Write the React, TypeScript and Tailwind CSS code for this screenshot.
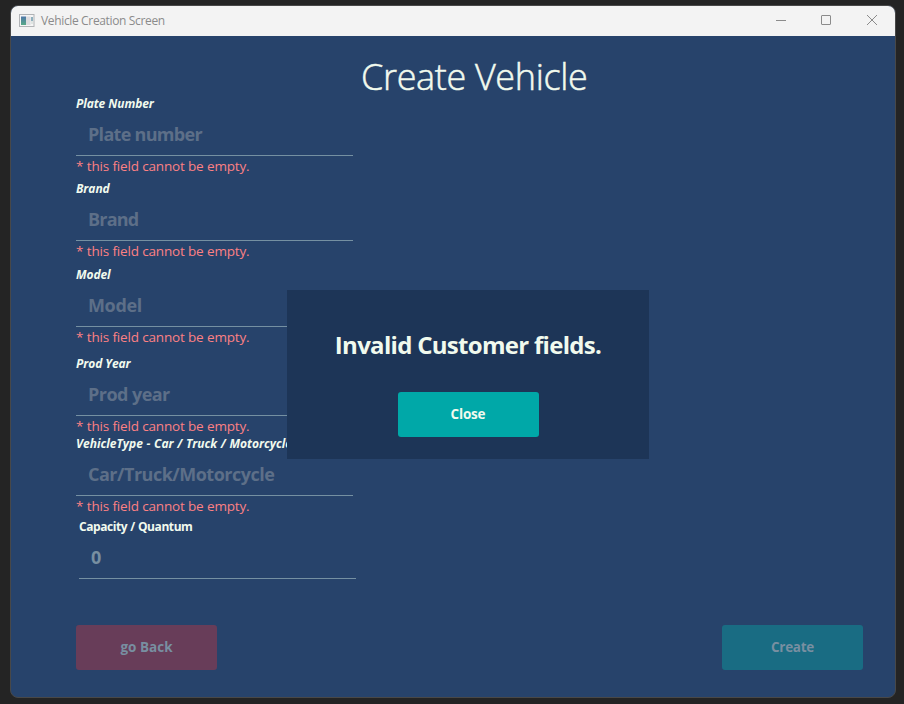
type FieldProps = {
  label: string;
  placeholder: string;
  className?: string;
  labelClass?: string;
  textClass?: string;
  valueClass?: string;
  error?: boolean;
};

function Field({
  label,
  placeholder,
  className = "",
  labelClass = "italic tracking-[-0.08px]",
  textClass = "text-[#5d6f88]",
  valueClass = "tracking-[-0.7px]",
  error = true,
}: FieldProps) {
  return (
    <div className={`h-20 w-[277px] whitespace-nowrap ${className}`}>
      <div className={`h-4 text-[12px] leading-4 font-bold text-[#f1faee] ${labelClass}`}>{label}</div>
      <div
        className={`flex h-11 items-center border-b border-[#7590a2] pt-[2px] pl-3 text-[18px] font-bold ${textClass}`}
      >
        <span className={valueClass}>{placeholder}</span>
      </div>
      {error && (
        <div className="h-5 text-[13.5px] leading-[20px] tracking-[-0.19px] text-[#fc8084] [word-spacing:0.2px]">
          * this field cannot be empty.
        </div>
      )}
    </div>
  );
}

function AppIcon() {
  return (
    <svg width="16" height="14" viewBox="0 0 16 14" className="shrink-0">
      <defs>
        <linearGradient id="pane" x1="0" y1="0" x2="0" y2="1">
          <stop offset="0" stopColor="#4e76a8" />
          <stop offset="1" stopColor="#57a987" />
        </linearGradient>
      </defs>
      <rect x="0.5" y="0.5" width="14.5" height="12" fill="#f5f5f5" stroke="#b1b3b6" />
      <rect x="2" y="2.5" width="5" height="8.5" fill="url(#pane)" />
      <rect x="7" y="2.5" width="4.5" height="8.5" fill="#dcdcdf" />
      <rect x="12" y="3" width="2" height="4" fill="#8fb0bd" />
      <rect x="12" y="7" width="2" height="3" fill="#dfe5e3" />
    </svg>
  );
}

export default function App() {
  return (
    <div className="h-[704px] w-[904px] overflow-hidden bg-[#242424] pt-[5px] pl-[10px] font-['Open_Sans','Noto_Sans',sans-serif]">
      <div className="relative flex h-[693px] w-[886px] flex-col overflow-hidden rounded-lg border border-[#484848] bg-[#27436b]">
        <header className="flex h-[30px] shrink-0 items-center bg-[#f3f3f3] pl-2">
          <AppIcon />
          <span className="ml-[6px] text-[12px] tracking-[-0.35px] whitespace-nowrap text-[#8b8b8b]">
            Vehicle Creation Screen
          </span>
          <svg
            width="104"
            height="14"
            viewBox="0 0 104 14"
            className="mr-[17px] mb-[2px] ml-auto"
            fill="none"
            stroke="#8b8b8b"
          >
            <path d="M2 7.5h10" />
            <rect x="47.5" y="2.5" width="9" height="9" rx="0.5" />
            <path d="M93 2l10 10M103 2l-10 10" />
          </svg>
        </header>

        <main className="flex grow flex-col pl-[65px]">
          <h1 className="h-[60px] pt-[16px] pl-[285px] text-[36px] leading-[50px] font-light tracking-[-0.35px] whitespace-nowrap text-[#f1faee] [-webkit-text-stroke:0.5px_#f1faee]">
            Create Vehicle
          </h1>
          <div className="flex flex-col">
            <Field label="Plate Number" placeholder="Plate number" />
            <Field label="Brand" placeholder="Brand" valueClass="tracking-[-0.8px]" className="mt-[5px]" />
            <Field label="Model" placeholder="Model" valueClass="tracking-[-0.35px]" className="mt-[6px]" />
            <Field label="Prod Year" placeholder="Prod year" valueClass="tracking-[-0.55px]" className="mt-[9px]" />
            <Field
              label="VehicleType - Car / Truck / Motorcycle"
              placeholder="Car/Truck/Motorcycle"
              labelClass="italic tracking-[-0.02px] [word-spacing:0.6px]"
              valueClass="tracking-[-0.5px]"
            />
            <Field
              label="Capacity / Quantum"
              placeholder="0"
              className="mt-[3px] ml-[3px]"
              labelClass="tracking-[-0.42px] [word-spacing:0.4px]"
              textClass="text-[#788fa1]"
              error={false}
            />
          </div>
          <div className="mt-[26px] mr-8 flex justify-between text-[13.5px] font-bold">
            <button className="h-[45px] w-[141px] rounded-[3px] bg-[#683d59] text-[#788fa1]">go Back</button>
            <button className="h-[45px] w-[141px] rounded-[3px] bg-[#196c83] tracking-[-0.3px] text-[#788fa1]">
              Create
            </button>
          </div>
        </main>

        <div
          role="dialog"
          className="absolute top-[284px] left-[276px] flex h-[169px] w-[362px] flex-col items-center bg-[#1d3557] text-[#f1faee]"
        >
          <p className="mt-[38px] text-[24px] leading-[34px] font-bold tracking-[-0.7px] whitespace-nowrap">
            Invalid Customer fields.
          </p>
          <button className="mt-[30px] h-[45px] w-[141px] rounded-[3px] bg-[#00a8a8] text-[13.5px] font-bold tracking-[-0.2px]">
            Close
          </button>
        </div>
      </div>
    </div>
  );
}
